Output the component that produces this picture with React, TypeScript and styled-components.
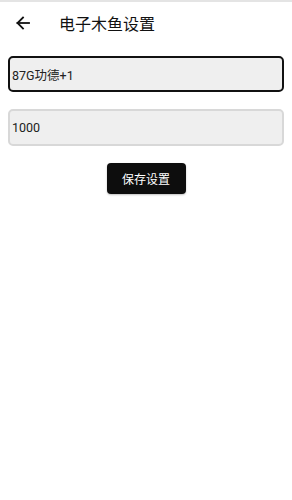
import React from 'react';
import styled, {createGlobalStyle} from "styled-components";

const GlobalStyle = createGlobalStyle`
    body {
        margin: 0;
        background: #fff;
        font-family: Roboto, "Noto Sans CJK SC", sans-serif;
    }
`

const App = () => {
    return (
        <Page>
            <GlobalStyle/>
            <TopLine/>
            <Header>
                <BackButton aria-label="back">
                    <svg width="16" height="16" viewBox="0 0 16 16" fill="none" stroke="#111" strokeWidth="1.8" strokeLinecap="square">
                        <path d="M14 8H2.5"/>
                        <path d="M8 2.5L2.5 8L8 13.5"/>
                    </svg>
                </BackButton>
                <Title>电子木鱼设置</Title>
            </Header>
            <Form>
                <Field defaultValue="87G功德+1" active/>
                <Field defaultValue="1000"/>
                <SaveButton>保存设置</SaveButton>
            </Form>
        </Page>
    );
};

export default App;

const Page = styled.div`
    width: 292px;
    min-height: 500px;
    background: #fff;
`

const TopLine = styled.div`
    height: 2px;
    background: #e4e4e4;
`

const Header = styled.header`
    height: 42px;
    display: flex;
    align-items: center;
    padding-left: 14px;
`

const BackButton = styled.button`
    border: none;
    background: none;
    padding: 0;
    width: 18px;
    height: 18px;
    display: flex;
    align-items: center;
    justify-content: center;
    margin-right: 27px;
`

const Title = styled.h1`
    margin: 0;
    font-size: 16px;
    font-weight: 400;
    color: #111;
`

const Form = styled.div`
    display: flex;
    flex-direction: column;
    align-items: center;
    padding: 12px 8px 0;
    gap: 17px;
`

const Field = styled.input<{active?: boolean}>`
    box-sizing: border-box;
    width: 100%;
    height: ${p => p.active ? 36 : 37}px;
    border-radius: 5px;
    border: ${p => p.active ? '2px solid #111' : '2px solid #d8d8d8'};
    background: #efefef;
    padding: 0 0 0 2px;
    font-family: Roboto, "Noto Sans CJK SC", sans-serif;
    font-size: 12.5px;
    color: #222;
    outline: none;
`

const SaveButton = styled.button`
    width: 79px;
    height: 31px;
    border: none;
    border-radius: 4px;
    background: #0d0d0d;
    color: #fff;
    font-family: Roboto, "Noto Sans CJK SC", sans-serif;
    font-size: 12px;
    box-shadow: 0 1px 2px rgba(0,0,0,0.25);
`
